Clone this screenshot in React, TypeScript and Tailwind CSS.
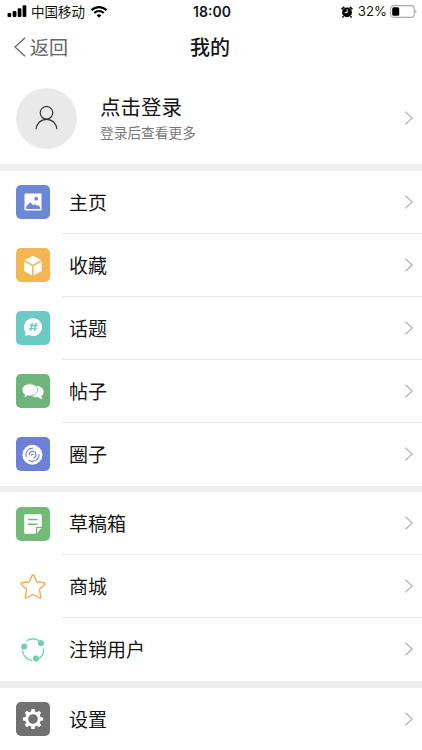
import type { ReactNode } from 'react';

type Item = { label: string; color: string; icon: ReactNode };

const content: Item[] = [
  {
    label: '主页',
    color: 'bg-[#6c87d6]',
    icon: (
      <>
        <rect x="8.5" y="8.5" width="17" height="17" rx="1.2" fill="#fff" />
        <circle cx="20.2" cy="13.7" r="1.9" fill="#6c87d6" />
        <path d="M10.2 24v-2.4l4.1-4.4 3 3.2 1.5-1.3 2 1.6 1-.8 2.2 2.2V24z" fill="#6c87d6" />
      </>
    ),
  },
  {
    label: '收藏',
    color: 'bg-[#f3b653]',
    icon: (
      <>
        <path d="M16.9 7.7l8.2 4.3-8.2 4.8L8.7 12z" fill="#fff" />
        <path d="M8.1 13.4l8 4.7v9.5l-8-4.7zM25.7 13.4l-8 4.7v9.5l8-4.7z" fill="#fff" />
      </>
    ),
  },
  {
    label: '话题',
    color: 'bg-[#6bcac6]',
    icon: (
      <>
        <path d="M17.2 7.2a8.9 8.9 0 1 1-4 16.9l-4 .7.3-3.7A8.9 8.9 0 0 1 17.2 7.2z" fill="#fff" />
        <path d="M16.3 11.8l-1.7 8.4M20.2 11.8l-1.7 8.4M13.6 14.5h7.7M13 17.6h7.7" stroke="#6bcac6" strokeWidth="1.4" fill="none" />
      </>
    ),
  },
  {
    label: '帖子',
    color: 'bg-[#6eb57c]',
    icon: (
      <>
        <path d="M20.7 11.9c3.9 0 6.9 2.6 6.9 5.8 0 1.8-.9 3.4-2.3 4.4.1 1.3.8 2.3 1.7 3-1.9 0-3.6-.7-4.8-1.8-4.7.5-8.2-2.1-8.2-5.6s3-5.8 6.7-5.8z" fill="#fff" />
        <path d="M13.8 9.8c4.3 0 7.7 2.7 7.7 6.1S18.1 22 13.8 22c-.8 0-1.6-.1-2.3-.3-1.1 1.1-2.5 1.6-4 1.6.8-.8 1.2-1.7 1.2-2.8-1.6-1.1-2.6-2.8-2.6-4.6 0-3.4 3.4-6.1 7.7-6.1z" fill="#fff" stroke="#6eb57c" strokeWidth=".8" />
      </>
    ),
  },
  {
    label: '圈子',
    color: 'bg-[#6c80d8]',
    icon: (
      <>
        <circle cx="16.4" cy="17.7" r="10" fill="#fff" />
        <path
          d="M10.2 19.6a6.6 6.6 0 0 1 6.4-8.5M23 17.5a6.6 6.6 0 0 1-9.9 5.9M13.2 17.7a3.4 3.4 0 1 1 4.6 3.2M15.6 18.4a1 1 0 0 1 1.6-.8"
          fill="none"
          stroke="#6c80d8"
          strokeWidth="1.1"
          strokeLinecap="round"
        />
      </>
    ),
  },
];

const tools: Item[] = [
  {
    label: '草稿箱',
    color: 'bg-[#73bb74]',
    icon: (
      <>
        <path d="M9.6 7.2h14.8c.9 0 1.4.6 1.4 1.4v11.2h-4.5c-.9 0-1.4.5-1.4 1.4v5.6H9.6c-.9 0-1.4-.6-1.4-1.4V8.6c0-.8.5-1.4 1.4-1.4z" fill="#fff" />
        <path d="M21.2 21.1h4.4l-4.4 5z" fill="#fff" />
        <path d="M12 12.5h9.7M12 17.3h9.7" stroke="#73bb74" strokeWidth="1.4" />
      </>
    ),
  },
  {
    label: '商城',
    color: 'bg-white',
    icon: (
      <path
        d="M16.2 5.4c.4-.9 1.3-.9 1.7 0l2.9 6.4 7.1.9c1.1.1 1.4 1 .7 1.7l-5.2 5 1.4 7.6c.2 1-.6 1.5-1.4 1L17 24.5l-6.3 3.5c-.9.5-1.6 0-1.4-1l1.4-7.6-5.3-5c-.7-.7-.4-1.6.6-1.7l7.2-.9z"
        fill="none"
        stroke="#f1aa56"
        strokeWidth="1.4"
        strokeLinejoin="round"
      />
    ),
  },
  {
    label: '注销用户',
    color: 'bg-white',
    icon: (
      <>
        <path
          d="M10.8 7.8a10.8 10.8 0 0 1 11.8-.3M27.6 15.8a10.8 10.8 0 0 1-4.3 9.7M15.5 27.4a10.8 10.8 0 0 1-9-9.9"
          fill="none"
          stroke="#74d0b5"
          strokeWidth="1.3"
          strokeLinecap="round"
        />
        <circle cx="8.2" cy="13.5" r="3.1" fill="#74d0b5" />
        <circle cx="25" cy="10" r="3.1" fill="#74d0b5" />
        <circle cx="20" cy="25.5" r="3.1" fill="#74d0b5" />
      </>
    ),
  },
];

const system: Item[] = [
  {
    label: '设置',
    color: 'bg-[#717171]',
    icon: (
      <>
        <circle cx="17" cy="17" r="6.3" fill="none" stroke="#fff" strokeWidth="3" />
        {[0, 45, 90, 135, 180, 225, 270, 315].map((deg) => (
          <path key={deg} d="M15 10.4l.4-3.5h3.2l.4 3.5z" fill="#fff" transform={`rotate(${deg} 17 17)`} />
        ))}
      </>
    ),
  },
];

function Chevron() {
  return (
    <svg className="h-4 w-2.5 shrink-0" viewBox="0 0 10 16" fill="none" stroke="#b2b2b2" strokeWidth="1.2">
      <path d="M1.5 1.7L8.2 8l-6.7 6.3" />
    </svg>
  );
}

function Row({ item, last }: { item: Item; last: boolean }) {
  return (
    <div className="flex h-[62.95px] items-center pl-4">
      <span className={`h-[34px] w-[34px] shrink-0 rounded-[5px] ${item.color}`}>
        <svg viewBox="0 0 34 34" className="h-full w-full">{item.icon}</svg>
      </span>
      <div className={`ml-3 flex h-full flex-1 items-center justify-between border-b pl-[7px] pr-2 ${last ? 'border-transparent' : 'border-[#e9e9e9]'}`}>
        <span className="pt-[3px] text-[19px] leading-none">{item.label}</span>
        <Chevron />
      </div>
    </div>
  );
}

function Group({ items }: { items: Item[] }) {
  return (
    <section className="bg-white">
      {items.map((item, i) => (
        <Row key={item.label} item={item} last={i === items.length - 1} />
      ))}
    </section>
  );
}

function StatusBar() {
  return (
    <div className="grid h-6 grid-cols-3 items-center pl-[7px] pr-[5px] text-[13.5px] leading-none">
      <div className="flex items-center">
        <svg className="mb-0.5 h-3 w-5" viewBox="0 0 20 12">
          <rect x=".5" y="8" width="3.7" height="4" rx="1" />
          <rect x="5.7" y="6" width="3.7" height="6" rx="1" />
          <rect x="10.7" y="3.2" width="3.7" height="8.8" rx="1" />
          <rect x="15.6" y=".3" width="3.7" height="11.7" rx="1" />
        </svg>
        <span className="ml-1 pt-px">中国移动</span>
        <svg className="ml-1.5 h-3 w-4" viewBox="0 0 16 12">
          <path d="M.5 4.1a10.8 10.8 0 0 1 15 0" fill="none" stroke="#000" strokeWidth="2.2" />
          <path d="M3.2 7a6.9 6.9 0 0 1 9.6 0" fill="none" stroke="#000" strokeWidth="2" />
          <path d="M5.6 9.3a3.6 3.6 0 0 1 4.8 0L8 11.8z" />
        </svg>
      </div>
      <span className="text-center font-['Inter'] text-[14px] font-semibold">18:00</span>
      <div className="flex items-center justify-end">
        <svg className="mb-px h-3 w-3" viewBox="0 0 12 12">
          <circle cx="6" cy="6.4" r="4.9" />
          <path d="M.6 3.3L3.2.8M11.4 3.3L8.8.8M2.5 10.2l-1 1.3M9.5 10.2l1 1.3" stroke="#000" strokeWidth="1.6" />
          <path d="M6.2 3.4v3.2H3.7" fill="none" stroke="#fff" strokeWidth="1" />
        </svg>
        <span className="ml-[5px] font-['Inter'] text-[13.2px]">32%</span>
        <svg className="ml-[3px] mb-px h-[13px] w-[27px]" viewBox="0 0 27 13">
          <rect x=".6" y=".6" width="23.6" height="11.8" rx="3.2" fill="none" stroke="#aaa" strokeWidth="1.1" />
          <rect x="2.2" y="2.2" width="7" height="8.6" rx="1.5" />
          <path d="M25.3 4.5c1.6.6 1.6 3.4 0 4z" fill="#aaa" />
        </svg>
      </div>
    </div>
  );
}

export default function App() {
  return (
    <div className="h-[750px] w-[422px] overflow-hidden bg-white font-['Inter','Noto_Sans_CJK_SC',sans-serif] text-[#151515]">
      <StatusBar />

      <header className="grid h-12 grid-cols-3 items-center pl-3.5 pr-4">
        <button className="flex items-center text-[19px] leading-none text-[#666]">
          <svg className="mb-0.5 h-5 w-3" viewBox="0 0 12 20" fill="none" stroke="#666" strokeWidth="1.3">
            <path d="M11 .7L1 10l10 9.3" />
          </svg>
          <span className="ml-1">返回</span>
        </button>
        <h1 className="text-center text-[20px] font-medium leading-none">我的</h1>
      </header>

      <div className="flex h-[92px] items-center pl-4 pr-2">
        <div className="flex h-[61px] w-[61px] items-center justify-center rounded-full bg-[#e9e9e9]">
          <svg className="h-6 w-6" viewBox="0 0 24 24" fill="none" stroke="#333" strokeWidth="1.2">
            <circle cx="11.5" cy="6.8" r="6.3" />
            <path d="M1 23.3c.5-5.5 4.500-10 10.500-10s10 4.500 10.500 10" />
          </svg>
        </div>
        <div className="ml-[23px] flex-1 pt-0.5">
          <p className="text-[20.5px] leading-7">点击登录</p>
          <p className="text-[13.7px] leading-[22px] text-[#777]">登录后查看更多</p>
        </div>
        <Chevron />
      </div>

      <div className="space-y-[6.7px] bg-[#efefef] pt-[7px]">
        <Group items={content} />
        <Group items={tools} />
        <Group items={system} />
      </div>
    </div>
  );
}
